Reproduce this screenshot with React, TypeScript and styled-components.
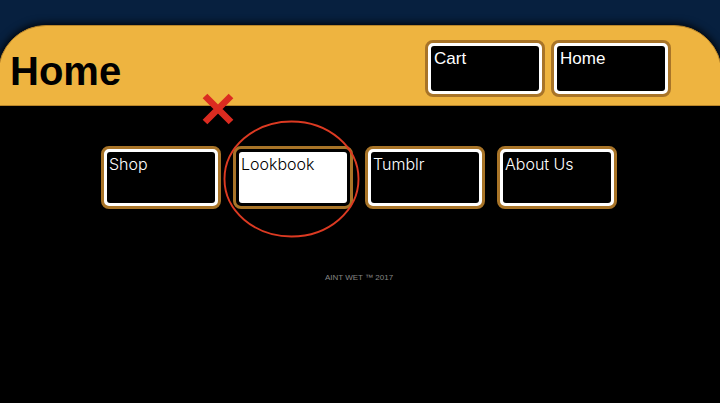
import React from "react";
import styled, { createGlobalStyle } from "styled-components";

const GlobalStyle = createGlobalStyle`
  * { box-sizing: border-box; }
  html, body { margin: 0; background: #000; overflow-x: hidden; }
  body { font-family: "Liberation Sans", Arial, sans-serif; color: #fff; }
`;

const Page = styled.div`
  min-height: 100vh;
  overflow: hidden;
  background: #000;
`;

const Backdrop = styled.div`
  padding-top: 25px;
  overflow: hidden;
  background: #07203f;
`;

const Header = styled.header`
  display: flex;
  align-items: flex-start;
  justify-content: space-between;
  margin: 0 -2px;
  padding: 14px 50px 8px 11px;
  border: 1px solid #b9852a;
  border-radius: 48px 48px 0 0;
  background: #eeb440;
  box-shadow: 0 0 8px 1px #000;
`;

const Title = styled.h1`
  margin: 8px 0 0;
  color: #000;
  font-size: 40px;
  line-height: 46px;
`;

const HeaderLinks = styled.nav`
  display: flex;
  gap: 6px;
`;

const Face = styled.span<{ $light?: boolean }>`
  flex: 1;
  padding: 2px;
  border-radius: 3px;
  background: ${(p) => (p.$light ? "#fff" : "#000")};
`;

const Tile = styled.a<{ $tall?: boolean; $light?: boolean }>`
  display: flex;
  width: 120px;
  height: ${(p) => (p.$tall ? 63 : 57)}px;
  padding: 3px;
  border: 3px solid #a87428;
  border-radius: 8px;
  background: ${(p) => (p.$light ? "#000" : "#fff")};
  color: ${(p) => (p.$light ? "#000" : "#fff")};
  font-family: ${(p) => (p.$tall ? 'Inter, "Liberation Sans"' : '"Liberation Sans", Arial')}, sans-serif;
  font-size: ${(p) => (p.$tall ? 16 : 17)}px;
  font-weight: ${(p) => (p.$tall ? 300 : 400)};
  line-height: 20px;
  text-decoration: none;

  ${HeaderLinks} & ${Face} {
    padding: 3px;
  }
`;

const Menu = styled.nav`
  display: flex;
  justify-content: center;
  gap: 12px;
  margin-top: 40px;
  padding-right: 2px;
`;

const MarkedItem = styled.div`
  position: relative;
`;

const Circle = styled.svg`
  position: absolute;
  top: -26px;
  left: -10px;
  width: 137px;
  height: 118px;
  pointer-events: none;
`;

const Cross = styled.svg`
  position: absolute;
  top: -53px;
  left: -31px;
  width: 32px;
  height: 32px;
  pointer-events: none;
`;

const Footer = styled.footer`
  margin-top: 63px;
  padding-right: 2px;
  color: #858585;
  font-size: 8px;
  line-height: 12px;
  text-align: center;
`;

export default function App() {
  return (
    <Page>
      <GlobalStyle />
      <Backdrop>
        <Header>
          <Title>Home</Title>
          <HeaderLinks aria-label="Account">
            <Tile href="#cart"><Face>Cart</Face></Tile>
            <Tile href="#home"><Face>Home</Face></Tile>
          </HeaderLinks>
        </Header>
      </Backdrop>
      <Menu aria-label="Main">
        <Tile $tall href="#shop"><Face>Shop</Face></Tile>
        <MarkedItem>
          <Tile $tall $light href="#lookbook"><Face $light>Lookbook</Face></Tile>
          <Circle viewBox="0 0 137 118" aria-hidden="true">
            <ellipse cx="68.5" cy="59" rx="67" ry="57.5" fill="none" stroke="#dc3a22" strokeWidth="1.9" />
          </Circle>
          <Cross viewBox="0 0 32 32" aria-hidden="true">
            <path d="M3 3 29 29M29 3 3 29" stroke="#db2b20" strokeWidth="6.6" />
          </Cross>
        </MarkedItem>
        <Tile $tall href="#tumblr"><Face>Tumblr</Face></Tile>
        <Tile $tall href="#about"><Face>About Us</Face></Tile>
      </Menu>
      <Footer>AINT WET ™ 2017</Footer>
    </Page>
  );
}
